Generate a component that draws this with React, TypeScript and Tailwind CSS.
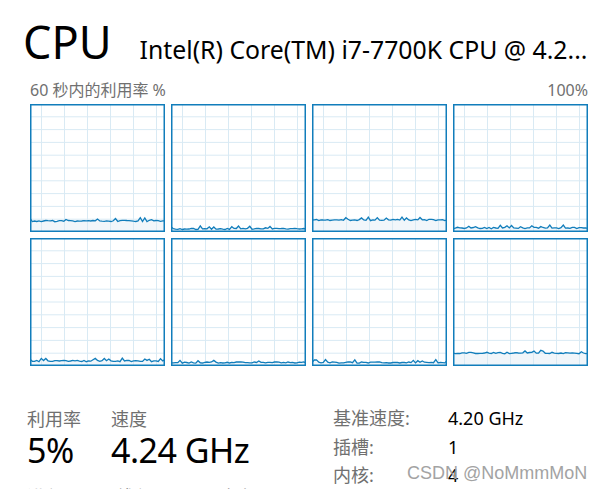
import React from "react";

const W = 135;
const H = 128;

// deterministic noise so every run draws the same traces
function rng(seed: number) {
  return () => {
    seed = (seed + 0x6d2b79f5) | 0;
    let t = Math.imul(seed ^ (seed >>> 15), 1 | seed);
    t = (t + Math.imul(t ^ (t >>> 7), 61 | t)) ^ t;
    return ((t ^ (t >>> 14)) >>> 0) / 4294967296;
  };
}

const cores = [
  { level: 11, seed: 3 },
  { level: 3, seed: 7 },
  { level: 12, seed: 11 },
  { level: 4, seed: 19 },
  { level: 5, seed: 23 },
  { level: 3.5, seed: 29 },
  { level: 3.5, seed: 31 },
  { level: 13, seed: 37 },
];

function CoreGraph({ level, seed }: { level: number; seed: number }) {
  const r = rng(seed);
  const pts: [number, number][] = [];
  for (let i = 0; i <= 60; i++) {
    const x = (i / 60) * W;
    let v = level + (r() - 0.5) * 1.4;
    if (r() < 0.12) v += 1.5 + r() * 1.5;
    pts.push([x, H - Math.max(v, 1.5)]);
  }
  const line = pts.map(([x, y]) => `${x.toFixed(1)},${y.toFixed(1)}`).join(" ");
  const area = `0,${H} ${line} ${W},${H}`;
  const hLines = Array.from({ length: 9 }, (_, i) => (i + 1) * (H / 10));
  const vLines = [11.5, 34.5, 57.5, 80.5, 103.5, 126.5];

  return (
    <svg width={W} height={H} viewBox={`0 0 ${W} ${H}`} className="block">
      <rect x="0" y="0" width={W} height={H} fill="#ffffff" />
      <polygon points={area} fill="#f1f6fa" />
      {hLines.map((y) => (
        <line key={"h" + y} x1="0" x2={W} y1={y} y2={y} stroke="#d9eaf4" strokeWidth="1" />
      ))}
      {vLines.map((x) => (
        <line key={"v" + x} x1={x} x2={x} y1="0" y2={H} stroke="#d9eaf4" strokeWidth="1" />
      ))}
      <polyline points={line} fill="none" stroke="#117dbb" strokeWidth="1.3" />
      <rect x="0.75" y="0.75" width={W - 1.5} height={H - 1.5} fill="none" stroke="#117dbb" strokeWidth="1.5" />
    </svg>
  );
}

export default function App() {
  return (
    <div className="relative w-[604px] h-[489px] overflow-hidden bg-white text-black font-['Noto_Sans','Noto_Sans_CJK_SC',sans-serif]">
      <div className="flex items-baseline pt-[19px] pl-[23px]">
        <span className="text-[45px] leading-none">CPU</span>
        <span className="ml-[28px] text-[24.8px] leading-none whitespace-nowrap">
          Intel(R) Core(TM) i7-7700K CPU @ 4.2...
        </span>
      </div>

      <div className="pl-[27px] pr-[16px]">
        <div className="ml-[3px] w-[558px]">
          <div className="mt-[16px] flex justify-between text-[16px] leading-[20px] text-[#707070]">
            <span>60 秒内的利用率 %</span>
            <span>100%</span>
          </div>

          <div className="mt-[4px] grid grid-cols-4 gap-[6px]">
            {cores.map((c) => (
              <CoreGraph key={c.seed} level={c.level} seed={c.seed} />
            ))}
          </div>
        </div>

        <div className="mt-[42px] flex">
          <div className="w-[306px]">
            <div className="flex">
              <div className="w-[84px]">
                <div className="text-[18px] leading-[22px] text-[#707070]">利用率</div>
                <div className="text-[34px] leading-[40px] tracking-[-0.5px]">5%</div>
              </div>
              <div>
                <div className="text-[18px] leading-[22px] text-[#707070]">速度</div>
                <div className="text-[34px] leading-[40px] tracking-[-0.5px]">4.24 GHz</div>
              </div>
            </div>
            <div className="mt-[16px] flex text-[18px] leading-[22px] text-[#707070]">
              <span className="w-[89px]">进程</span>
              <span className="w-[107px]">线程</span>
              <span>句柄</span>
            </div>
          </div>

          <div className="-mt-[4px] grid grid-cols-[115px_auto] auto-rows-[28.5px] items-center text-[18px] leading-[22px]">
            <span className="text-[#707070]">基准速度:</span>
            <span>4.20 GHz</span>
            <span className="text-[#707070]">插槽:</span>
            <span>1</span>
            <span className="text-[#707070]">内核:</span>
            <span>4</span>
          </div>
        </div>
      </div>

      <div className="absolute left-[407px] top-[464px] text-[18px] leading-none text-[#a3a3a3] font-['Liberation_Sans',sans-serif]">
        CSDN @NoMmmMoN
      </div>
    </div>
  );
}
